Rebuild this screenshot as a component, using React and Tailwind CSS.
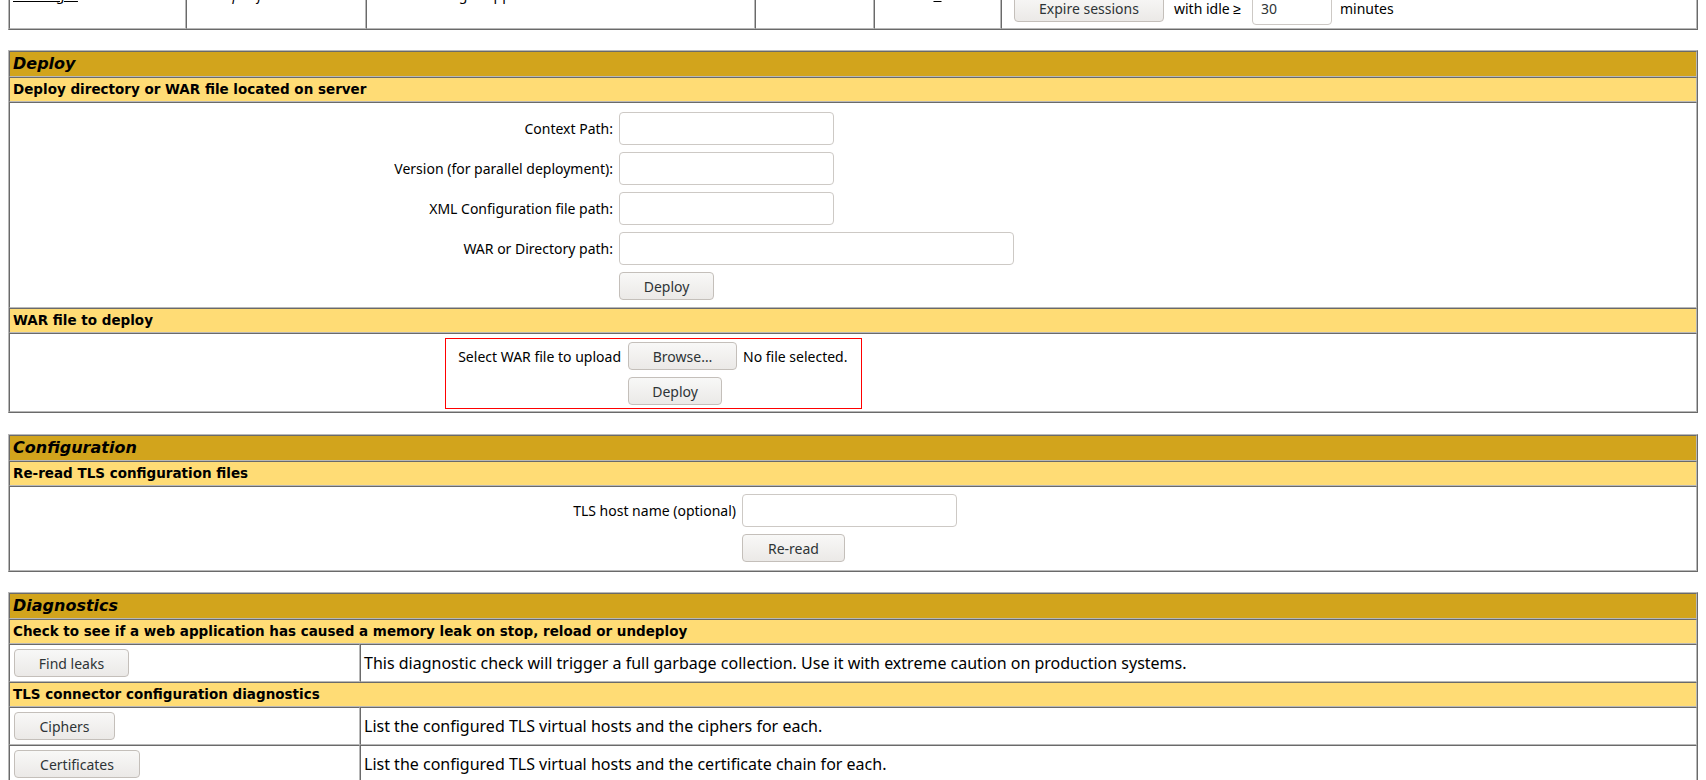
import React from "react";

const CELL =
  "border border-t-[#6a6a6a] border-l-[#6a6a6a] border-r-[#b8b8b8] border-b-[#b8b8b8]";
const TABLE =
  "border border-t-[#b8b8b8] border-l-[#b8b8b8] border-r-[#6a6a6a] border-b-[#6a6a6a]";
const HEAD = "font-['DejaVu_Sans',sans-serif]";

function Btn({ className = "", children }) {
  return (
    <button
      type="button"
      className={`flex h-[28px] shrink-0 items-center justify-center rounded-[4px] border border-[#c4bfba] bg-linear-to-b from-[#f8f8f7] to-[#ebe9e7] font-['Noto_Sans',sans-serif] text-[14px] leading-[19px] text-[#2e3436] ${className}`}
    >
      {children}
    </button>
  );
}

function Field({ className = "", value = "" }) {
  return (
    <input
      type="text"
      readOnly
      defaultValue={value}
      className={`block h-[33px] rounded-[4px] border border-[#cdc9c5] bg-white px-[8px] font-['Noto_Sans',sans-serif] text-[14px] text-[#2e3436] outline-none ${className}`}
    />
  );
}

function Title({ children }) {
  return (
    <div
      className={`${CELL} bg-[#d2a41c] px-[3px] py-[3px] ${HEAD} text-[16px] leading-[18px] font-bold italic text-black`}
    >
      {children}
    </div>
  );
}

function Sub({ children }) {
  return (
    <div
      className={`${CELL} bg-[#ffdc75] px-[3px] py-[3px] ${HEAD} text-[13.5px] leading-[17px] font-bold text-black`}
    >
      {children}
    </div>
  );
}

function Label({ children }) {
  return <div className="pr-[3px] text-right leading-[19px]">{children}</div>;
}

function TopFragment() {
  return (
    <div className="h-[30px] overflow-hidden">
      <div
        className={`-mt-[42px] grid grid-cols-[177px_180px_389px_119px_127px_1fr] grid-rows-[28px_42px] ${TABLE}`}
      >
        <div className={`${CELL} row-span-2 flex items-center px-[3px] leading-[19px]`}>
          <a className="text-black underline">/manager</a>
        </div>
        <div className={`${CELL} row-span-2 flex items-center px-[3px] leading-[19px]`}>
          <i>None specified</i>
        </div>
        <div className={`${CELL} row-span-2 flex items-center px-[3px] leading-[19px]`}>
          Tomcat Manager Application
        </div>
        <div className={`${CELL} row-span-2 flex items-center justify-center px-[3px] leading-[19px]`}>
          true
        </div>
        <div className={`${CELL} row-span-2 flex items-center justify-center px-[3px] leading-[19px]`}>
          <a className="text-black underline">1</a>
        </div>
        <div className={`${CELL} flex items-center gap-[4px] overflow-hidden pl-[12px]`}>
          <Btn className="w-[70px]">Start</Btn>
          <Btn className="w-[70px]">Stop</Btn>
          <Btn className="w-[80px]">Reload</Btn>
          <Btn className="w-[95px]">Undeploy</Btn>
        </div>
        <div className={`${CELL} flex items-center pl-[12px] leading-[19px]`}>
          <Btn className="w-[150px]">Expire sessions</Btn>
          <span className="ml-[10px]">with idle ≥</span>
          <Field className="ml-[11px] w-[80px]" value="30" />
          <span className="ml-[8px]">minutes</span>
        </div>
      </div>
    </div>
  );
}

function DeploySection() {
  return (
    <section className={`mt-[20px] ${TABLE}`}>
      <Title>Deploy</Title>
      <Sub>Deploy directory or WAR file located on server</Sub>
      <div className={`${CELL} pt-[9px] pb-[7px]`}>
        <div className="grid grid-cols-[606px_auto] items-center gap-y-[7px]">
          <Label>Context Path:</Label>
          <div className="pl-[3px]">
            <Field className="w-[215px]" />
          </div>
          <Label>Version (for parallel deployment):</Label>
          <div className="pl-[3px]">
            <Field className="w-[215px]" />
          </div>
          <Label>XML Configuration file path:</Label>
          <div className="pl-[3px]">
            <Field className="w-[215px]" />
          </div>
          <Label>WAR or Directory path:</Label>
          <div className="pl-[3px]">
            <Field className="w-[395px]" />
          </div>
          <div />
          <div className="pl-[3px]">
            <Btn className="w-[95px]">Deploy</Btn>
          </div>
        </div>
      </div>
      <Sub>WAR file to deploy</Sub>
      <div className={`${CELL} pt-[4px] pb-[2px]`}>
        <div className="ml-[435px] w-fit border border-[#ff0000] py-[3px]">
          <div className="grid grid-cols-[179px_236px] items-center gap-y-[7px]">
            <div className="pr-[4px] text-right leading-[19px]">Select WAR file to upload</div>
            <div className="flex items-center gap-[6px] pl-[3px]">
              <Btn className="w-[109px]">Browse…</Btn>
              <span className="whitespace-nowrap leading-[19px]">No file selected.</span>
            </div>
            <div />
            <div className="pl-[3px]">
              <Btn className="w-[94px]">Deploy</Btn>
            </div>
          </div>
        </div>
      </div>
    </section>
  );
}

function ConfigSection() {
  return (
    <section className={`mt-[21px] ${TABLE}`}>
      <Title>Configuration</Title>
      <Sub>Re-read TLS configuration files</Sub>
      <div className={`${CELL} pt-[7px] pb-[8px]`}>
        <div className="grid grid-cols-[729px_auto] items-center gap-y-[7px]">
          <Label>TLS host name (optional)</Label>
          <div className="pl-[3px]">
            <Field className="w-[215px]" />
          </div>
          <div />
          <div className="pl-[3px]">
            <Btn className="w-[103px]">Re-read</Btn>
          </div>
        </div>
      </div>
    </section>
  );
}

function DiagRow({ btn, w, text }) {
  return (
    <div className="grid grid-cols-[351px_1fr]">
      <div className={`${CELL} py-[4px] pl-[4px]`}>
        <Btn className={w}>{btn}</Btn>
      </div>
      <div className={`${CELL} flex items-center px-[3px] text-[16px] leading-[20px]`}>{text}</div>
    </div>
  );
}

function DiagnosticsSection() {
  return (
    <section className={`mt-[20px] ${TABLE}`}>
      <Title>Diagnostics</Title>
      <Sub>Check to see if a web application has caused a memory leak on stop, reload or undeploy</Sub>
      <DiagRow
        btn="Find leaks"
        w="w-[115px]"
        text="This diagnostic check will trigger a full garbage collection. Use it with extreme caution on production systems."
      />
      <Sub>TLS connector configuration diagnostics</Sub>
      <DiagRow
        btn="Ciphers"
        w="w-[101px]"
        text="List the configured TLS virtual hosts and the ciphers for each."
      />
      <DiagRow
        btn="Certificates"
        w="w-[126px]"
        text="List the configured TLS virtual hosts and the certificate chain for each."
      />
      <DiagRow
        btn="Trusted Certificates"
        w="w-[170px]"
        text="List the configured TLS virtual hosts and the trusted certificates for each."
      />
    </section>
  );
}

export default function App() {
  return (
    <div className="min-h-screen bg-white px-[8px] pb-[20px] font-['Noto_Sans',sans-serif] text-[14px] text-black">
      <TopFragment />
      <DeploySection />
      <ConfigSection />
      <DiagnosticsSection />
    </div>
  );
}
